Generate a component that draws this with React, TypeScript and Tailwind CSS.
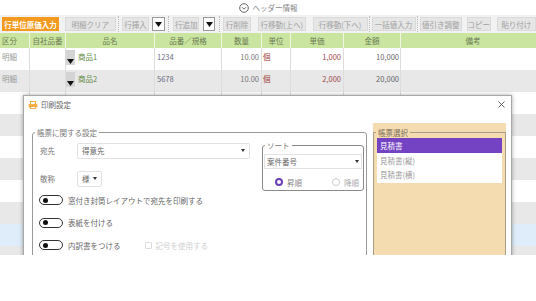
import React from 'react';

const cols = [
  { label: '区分', w: 30, align: 'left' },
  { label: '自社品番', w: 36, align: 'center' },
  { label: '品名', w: 89, align: 'center' },
  { label: '品番／規格', w: 67, align: 'center' },
  { label: '数量', w: 40, align: 'center' },
  { label: '単位', w: 29, align: 'center' },
  { label: '単価', w: 53, align: 'center' },
  { label: '金額', w: 57, align: 'center' },
  { label: '備考', w: 145, align: 'center' },
];

const rows = [
  { kubun: '明細', name: '商品1', code: '1234', qty: '10.00', unit: '個', price: '1,000', amount: '10,000', bg: 'bg-white' },
  { kubun: '明細', name: '商品2', code: '5678', qty: '10.00', unit: '個', price: '2,000', amount: '20,000', bg: 'bg-[#e8e8e8]' },
  { bg: 'bg-white' },
  { bg: 'bg-[#e8e8e8]' },
  { bg: 'bg-white' },
  { bg: 'bg-[#e8e8e8]' },
  { bg: 'bg-white' },
  { bg: 'bg-[#e8e8e8]' },
  { bg: 'bg-[#deedf9]' },
  { bg: 'bg-[#e8e8e8]' },
];

const DropTri = () => (
  <svg width="7" height="5" viewBox="0 0 7 5"><path d="M0 0h7L3.5 5z" fill="#111" /></svg>
);

const SmallTri = () => (
  <svg width="4" height="3" viewBox="0 0 4 3"><path d="M0 0h4L2 3z" fill="#333" /></svg>
);

const ToolBtn = ({ label, w, ml }: { label: string; w: string; ml: string }) => (
  <div className={`${w} ${ml} h-[14px] flex items-center justify-center bg-[#e6e6e6] border border-[#dadada] text-[#a0a0a0] whitespace-nowrap`}>
    {label}
  </div>
);

const DropBtn = ({ w, ml }: { w: string; ml: string }) => (
  <div className={`${w} ${ml} h-[14px] flex items-center justify-center bg-white border border-[#999]`}>
    <DropTri />
  </div>
);

const Toggle = ({ label, extra }: { label: string; extra?: boolean }) => (
  <div className="h-[13px] flex items-center">
    <div className="w-[24px] h-[10px] rounded-full border-[1.5px] border-[#333] flex items-center pl-[3px]">
      <div className="w-[5px] h-[5px] rounded-full bg-[#111]" />
    </div>
    <span className="ml-[5px] text-[#666]">{label}</span>
    {extra && (
      <div className="flex items-center ml-[24px] text-[#d0d0d0]">
        <div className="w-[7px] h-[7px] border border-[#ddd] rounded-[1px]" />
        <span className="ml-[4px]">記号を使用する</span>
      </div>
    )}
  </div>
);

export default function App() {
  return (
    <div className="w-[536px] h-[301px] bg-white overflow-hidden font-['Noto_Sans_CJK_JP','Noto_Sans',sans-serif] text-[7.5px] leading-[11px] text-[#777]">
      <div className="relative h-[255px] overflow-hidden">
        {/* header info */}
        <div className="h-[15px] flex items-center justify-center gap-[4px]">
          <svg width="10" height="10" viewBox="0 0 10 10">
            <circle cx="5" cy="5" r="4.3" fill="none" stroke="#555" strokeWidth="0.9" />
            <path d="M3 4.2l2 2 2-2" fill="none" stroke="#555" strokeWidth="0.9" />
          </svg>
          <span className="text-[#888]">ヘッダー情報</span>
        </div>

        {/* toolbar */}
        <div className="h-[18px] flex items-center bg-[#f2f2f2]">
          <div className="ml-[2px] w-[58px] h-[14px] flex items-center justify-center bg-[#f39a1f] text-white font-bold whitespace-nowrap">行単位原価入力</div>
          <ToolBtn label="明細クリア" w="w-[52px]" ml="ml-[6px]" />
          <div className="ml-[2px] h-[16px] border-l border-dotted border-[#bbb]" />
          <ToolBtn label="行挿入" w="w-[28px]" ml="ml-[3px]" />
          <DropBtn w="w-[13px]" ml="ml-[3px]" />
          <div className="ml-[3px] h-[16px] border-l border-dotted border-[#bbb]" />
          <ToolBtn label="行追加" w="w-[27px]" ml="ml-[4px]" />
          <DropBtn w="w-[12px]" ml="ml-[4px]" />
          <div className="ml-[4px] h-[16px] border-l border-dotted border-[#bbb]" />
          <ToolBtn label="行削除" w="w-[28px]" ml="ml-[3px]" />
          <ToolBtn label="行移動(上へ)" w="w-[49px]" ml="ml-[7px]" />
          <ToolBtn label="行移動(下へ)" w="w-[56px]" ml="ml-[7px]" />
          <div className="ml-[1px] h-[16px] border-l border-dotted border-[#bbb]" />
          <ToolBtn label="一括値入力" w="w-[45px]" ml="ml-[2px]" />
          <div className="ml-[1px] h-[16px] border-l border-dotted border-[#bbb]" />
          <ToolBtn label="値引き調整" w="w-[43px]" ml="ml-[2px]" />
          <ToolBtn label="コピー" w="w-[24px]" ml="ml-[5px]" />
          <ToolBtn label="貼り付け" w="w-[40px]" ml="ml-[6px]" />
        </div>

        {/* table header */}
        <div className="h-[15px] flex bg-[#c9e59f] text-[#6b7a55]">
          {cols.map((c) => (
            <div
              key={c.label}
              style={{ width: c.w }}
              className={`shrink-0 flex items-center border-r border-white/70 ${c.align === 'left' ? 'pl-[2px]' : 'justify-center'}`}
            >
              {c.label}
            </div>
          ))}
        </div>

        {/* table rows */}
        {rows.map((r, i) => (
          <div key={i} className={`h-[22px] flex ${r.bg}`}>
            <div className="w-[30px] shrink-0 pl-[2px] pt-[3px] border-r border-[#ddd] text-[#999]">{r.kubun}</div>
            <div className="w-[36px] shrink-0 border-r border-[#ddd]" />
            <div className="w-[89px] shrink-0 flex border-r border-[#ddd]">
              {r.name && (
                <div className="mt-[2px] w-[9px] h-[15px] bg-[#d4d4d4] flex items-end justify-center pb-[1px]">
                  <DropTri />
                </div>
              )}
              <span className="pl-[3px] pt-[3px] text-[#5f8a45]">{r.name}</span>
            </div>
            <div className="w-[67px] shrink-0 pl-[2px] pt-[3px] border-r border-[#ddd] text-[#6b6b80]">{r.code}</div>
            <div className="w-[40px] shrink-0 pr-[2px] pt-[3px] text-right border-r border-[#ddd] text-[#777]">{r.qty}</div>
            <div className="w-[29px] shrink-0 pl-[1px] pt-[3px] border-r border-[#ddd] text-[#9b3a3a]">{r.unit}</div>
            <div className="w-[53px] shrink-0 pr-[2px] pt-[3px] text-right border-r border-[#ddd] text-[#a04848]">{r.price}</div>
            <div className="w-[57px] shrink-0 pr-[1px] pt-[3px] text-right border-r border-[#ddd] text-[#666]">{r.amount}</div>
            <div className="w-[145px] shrink-0" />
          </div>
        ))}

        {/* print settings dialog */}
        <div className="absolute left-[23px] top-[95px] w-[489px] h-[200px] bg-white border border-[#a8a8a8] shadow-[0_0_4px_rgba(0,0,0,0.35)]">
          <div className="h-[17px] flex items-center pl-[4px] pr-[6px]">
            <svg width="10" height="8" viewBox="0 0 10 8">
              <rect x="2.5" y="0.5" width="5" height="3" fill="#fff" stroke="#f0a030" strokeWidth="0.9" />
              <rect x="0.5" y="3" width="9" height="3.5" rx="1" fill="#f4b040" />
              <rect x="2.5" y="5.5" width="5" height="2" fill="#fff" stroke="#f0a030" strokeWidth="0.8" />
            </svg>
            <span className="ml-[3px] text-[#666]">印刷設定</span>
            <svg className="ml-auto" width="7" height="7" viewBox="0 0 7 7">
              <path d="M0.5 0.5l6 6M6.5 0.5l-6 6" stroke="#555" strokeWidth="0.9" />
            </svg>
          </div>

          <div className="flex items-start pl-[8px] pt-[10px] gap-[6px]">
            {/* report settings */}
            <fieldset className="mt-[3.5px] w-[335px] h-[200px] border border-[#9a9a9a] rounded-[3px]">
              <legend className="ml-[2px] px-[2px] leading-[11px] text-[#777]">帳票に関する設定</legend>
              <div className="flex pl-[7px] pr-[2px]">
                <div className="flex-1 flex flex-col gap-[12px] pt-[5px]">
                  <div className="h-[16px] flex items-center">
                    <span className="w-[37px] text-[#777]">宛先</span>
                    <div className="w-[173px] h-[16px] border border-[#e2e2e2] rounded-[2px] flex items-center justify-between px-[4px] text-[#666]">
                      <span>得意先</span>
                      <SmallTri />
                    </div>
                  </div>
                  <div className="h-[16px] flex items-center">
                    <span className="w-[37px] text-[#777]">敬称</span>
                    <div className="w-[25px] h-[16px] border border-[#e2e2e2] rounded-[2px] flex items-center justify-between px-[4px] text-[#666]">
                      <span>様</span>
                      <SmallTri />
                    </div>
                  </div>
                </div>
                <fieldset className="mt-[2px] w-[102px] border border-[#8a8a8a] rounded-[3px] px-[1px] pb-[3px]">
                  <legend className="ml-[1px] px-[2px] leading-[11px] text-[#777]">ソート</legend>
                  <div className="mt-[3px] h-[15px] border border-[#e2e2e2] flex items-center justify-between px-[2px] text-[#666]">
                    <span>案件番号</span>
                    <SmallTri />
                  </div>
                  <div className="pt-[9px] h-[18px] flex items-center pl-[11px]">
                    <div className="w-[8px] h-[8px] rounded-full border-[2px] border-[#6a3fba]" />
                    <span className="ml-[4px] text-[#888]">昇順</span>
                    <div className="ml-[30px] w-[8px] h-[8px] rounded-full border border-[#ccc]" />
                    <span className="ml-[4px] text-[#aaa]">降順</span>
                  </div>
                </fieldset>
              </div>
              <div className="mt-[3px] pl-[6px] flex flex-col gap-[9.5px]">
                <Toggle label="窓付き封筒レイアウトで宛先を印刷する" />
                <Toggle label="表紙を付ける" />
                <Toggle label="内訳書をつける" extra />
              </div>
            </fieldset>

            {/* report select */}
            <div className="w-[133px] h-[200px] bg-[#f5dcb0] pt-[4px]">
              <fieldset className="h-[190px] border border-[#a99d89] bg-[#f5dcb0]">
                <legend className="ml-[2px] px-[2px] leading-[11px] text-[#7a7060]">帳票選択</legend>
                <div className="mx-[3px] bg-white pb-[2px]">
                  <div className="h-[15px] flex items-center px-[3px] bg-[#7443c3] text-white">見積書</div>
                  <div className="h-[14px] flex items-center px-[3px] text-[#999]">見積書(縦)</div>
                  <div className="h-[14px] flex items-center px-[3px] text-[#999]">見積書(横)</div>
                </div>
              </fieldset>
            </div>
          </div>
        </div>
      </div>
    </div>
  );
}
